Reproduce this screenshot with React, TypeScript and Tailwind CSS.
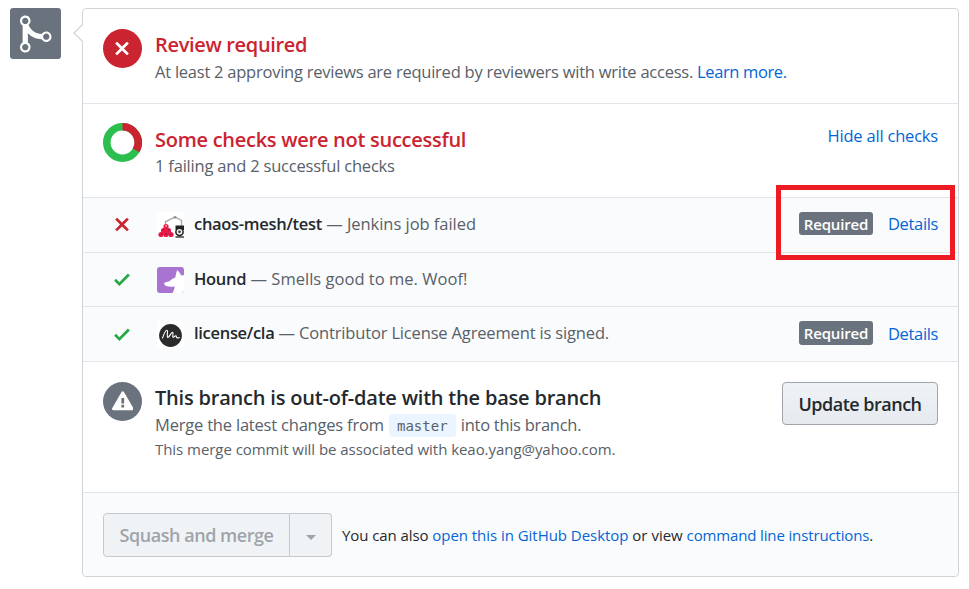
import React from "react";

function XIcon({ className }: { className: string }) {
  return (
    <svg viewBox="0 0 12 16" className={className} fill="currentColor">
      <path d="M7.48 8l3.75 3.75-1.48 1.48L6 9.48l-3.75 3.75-1.48-1.48L4.52 8 .77 4.25l1.48-1.48L6 6.52l3.75-3.75 1.48 1.48L7.48 8z" />
    </svg>
  );
}

function CheckIcon() {
  return (
    <svg viewBox="0 0 12 16" className="h-[21px] w-[16px] text-[#28a745]" fill="currentColor">
      <path d="M12 5l-8 8-4-4 1.5-1.5L4 10l6.5-6.5L12 5z" />
    </svg>
  );
}

function MergeIcon() {
  return (
    <svg viewBox="0 0 12 16" className="h-[42px] w-[31.5px] text-white" fill="currentColor">
      <path
        fillRule="evenodd"
        d="M10 7c-.73 0-1.38.41-1.73 1.02V8C7.22 7.98 6 7.64 5.14 6.98c-.75-.58-1.5-1.61-1.89-2.44A1.993 1.993 0 002 .99C.89.99 0 1.89 0 3a2 2 0 001 1.72v6.56c-.59.35-1 .99-1 1.72 0 1.11.89 2 2 2a1.993 1.993 0 001-3.72V7.67c.67.7 1.44 1.27 2.3 1.69.86.42 2.03.63 2.97.64v-.02c.36.61 1 1.02 1.73 1.02 1.11 0 2-.89 2-2 0-1.11-.89-2-2-2zm-6.8 6c0 .66-.55 1.2-1.2 1.2-.65 0-1.2-.55-1.2-1.2 0-.65.55-1.2 1.2-1.2.65 0 1.2.55 1.2 1.2zM3.2 3c0 .66-.55 1.2-1.2 1.2-.65 0-1.2-.55-1.2-1.2 0-.65.55-1.2 1.2-1.2.65 0 1.2.55 1.2 1.2zm6.8 7.2c-.65 0-1.2-.55-1.2-1.2 0-.65.55-1.2 1.2-1.2.65 0 1.2.55 1.2 1.2 0 .65-.55 1.2-1.2 1.2z"
      />
    </svg>
  );
}

function AlertIcon() {
  return (
    <svg viewBox="0 0 16 16" className="h-[21.5px] w-[21.5px] text-white" fill="currentColor">
      <path
        fillRule="evenodd"
        d="M8.893 1.5c-.183-.31-.52-.5-.887-.5s-.703.19-.886.5L.138 13.499a.98.98 0 000 1.001c.193.31.53.501.886.501h13.964c.367 0 .704-.19.877-.5a1.03 1.03 0 00.01-1.002L8.893 1.5zm.133 11.497H6.987v-2.003h2.039v2.003zm0-3.004H6.987V5.987h2.039v4.006z"
      />
    </svg>
  );
}

function StatusDonut() {
  return (
    <svg viewBox="0 0 39 39" className="h-[39px] w-[39px] shrink-0" fill="none" strokeWidth="7.6">
      <circle cx="19.5" cy="19.5" r="15.7" stroke="#2cbe4e" />
      <path d="M19.5 3.8A15.7 15.7 0 0 1 33.1 27.35" stroke="#cb2431" />
    </svg>
  );
}

function ChaosAvatar() {
  return (
    <svg viewBox="0 0 27 27" className="h-[27px] w-[27px]">
      <rect width="27" height="27" rx="3" fill="#fff" />
      <path d="M8.5 12V9.8L18 5l6.500 3.500v5" stroke="#aaa" strokeWidth="1.400" fill="none" />
      <circle cx="18" cy="5.300" r="1.500" fill="#999" />
      <g fill="#ed1846">
        <circle cx="9" cy="14.600" r="2.600" />
        <circle cx="6.500" cy="18.500" r="2.600" />
        <circle cx="11.500" cy="18.500" r="2.600" />
        <circle cx="4" cy="22.500" r="2.600" />
        <circle cx="9" cy="22.500" r="2.600" />
        <circle cx="14" cy="22.500" r="2.600" />
        <path d="M9 14l6 9H3z" />
      </g>
      <g fill="#7a2757">
        <circle cx="6.400" cy="17.800" r=".8" />
        <circle cx="11.600" cy="17.800" r=".8" />
        <circle cx="4.500" cy="21.800" r=".8" />
        <circle cx="9" cy="21.800" r=".9" />
        <circle cx="13.500" cy="21.800" r=".8" />
        <circle cx="9" cy="14" r=".8" fill="#fff" />
      </g>
      <path d="M18.500 13.500h8.500v4.500h-8.500z" fill="#222" />
      <circle cx="22.500" cy="20" r="4.400" fill="#222" />
      <circle cx="22.500" cy="19.800" r="2.900" fill="#eee" />
      <circle cx="22.500" cy="19.800" r="1.300" fill="#333" />
      <path d="M18.500 25H27" stroke="#333" strokeWidth="1.400" />
    </svg>
  );
}

function HoundAvatar() {
  return (
    <svg viewBox="0 0 27 26" className="h-[26px] w-[27px]">
      <rect width="27" height="26" rx="3" fill="#a873d1" />
      <path
        d="M7.200 15.800l5.300-1.500c1-.8 2.400-2.800 5.700-3.800L20 3c1.800 1.500 3.400 3.300 4.200 5.500L27 8v15a3 3 0 0 1-3 3h-8.500c1.200-2 2-4.200 2.200-6.500-3 .4-6 .4-8.500-.5-1.300-.5-2.200-1.700-2-3.200z"
        fill="#fff"
      />
    </svg>
  );
}

function LicenseAvatar() {
  return (
    <svg viewBox="0 0 27 27" className="h-[27px] w-[27px]">
      <rect width="27" height="27" rx="3" fill="#fff" />
      <circle cx="13.500" cy="14.500" r="11.400" fill="#2b2b2b" />
      <path
        d="M5.500 17C7 13 8.600 9.300 9.800 9.300c1.700 0-.3 5.500.8 7 1.300 1 3.300-5 5-4.900 1.500.4-.8 4 .4 4.800 1 .4 1.900-1.700 2.900-1.400.9.400.2 1.800 1.300 2.100.8.100 1.500-.2 2.100-.3"
        stroke="#fff"
        strokeWidth="1.100"
        fill="none"
        strokeLinecap="round"
      />
    </svg>
  );
}

type CheckRowProps = {
  status: React.ReactNode;
  avatar: React.ReactNode;
  name: React.ReactNode;
  message: React.ReactNode;
  actions?: React.ReactNode;
  className: string;
};

function RequiredBadge({ className }: { className: string }) {
  return (
    <span
      className={`flex w-[74px] items-center justify-center rounded-[3px] bg-[#6a737d] text-[15px] font-semibold tracking-[-0.18px] text-white ${className}`}
    >
      Required
    </span>
  );
}

function CheckRow({ status, avatar, name, message, actions, className }: CheckRowProps) {
  return (
    <div className={`flex items-center border-b border-[#e1e4e8] bg-[#fafbfc] pr-5 pl-5 ${className}`}>
      <div className="flex w-[37px] justify-center">{status}</div>
      <div className="ml-[17px] w-[37px]">{avatar}</div>
      <div className="flex-1 pb-[2px]">
        {name}
        {message}
      </div>
      {actions}
    </div>
  );
}

export default function App() {
  return (
    <div className="relative flex h-[589px] w-[969px] bg-white pt-2 pl-[10px] font-['Open_Sans','Noto_Sans',sans-serif] text-[16.5px] leading-6 whitespace-nowrap text-[#586069]">
      <div className="flex h-[51px] w-[51px] shrink-0 rounded-[3px] bg-[#6a737d] pt-[5px] pl-[10px]">
        <MergeIcon />
      </div>

      <div className="relative ml-[21px] flex h-[569px] w-[877px] flex-col rounded-[4px] border border-[#d1d5da] bg-white">
        <svg viewBox="0 0 11 20" className="absolute top-[14px] -left-[10px] h-5 w-[11px]">
          <path d="M11 0L1 10l10 10z" fill="#fff" />
          <path d="M10 1L1 10l9 9" fill="none" stroke="#d1d5da" strokeWidth="1.300" />
        </svg>

        <section className="flex h-[95px] border-b border-[#e1e4e8] pt-5 pl-5">
          <div className="flex h-[39px] w-[39px] items-center justify-center rounded-full bg-[#cb2431] pr-[2px] text-white">
            <XIcon className="h-[21px] w-[16px]" />
          </div>
          <div className="ml-[13px]">
            <h3 className="mt-[2px] text-[20px] leading-7 font-semibold tracking-[-0.33px] text-[#cb2431]">Review required</h3>
            <p className="mt-px">
              <span className="tracking-[-0.24px]">
                At least 2 approving reviews are required by reviewers with write access.{" "}
              </span>
              <a className="tracking-[-0.38px] text-[#0366d6]">Learn more.</a>
            </p>
          </div>
        </section>

        <section className="flex h-[94px] border-b border-[#e1e4e8] pt-[19px] pr-5 pl-5">
          <StatusDonut />
          <div className="ml-[13px] flex-1">
            <h3 className="mt-[3px] text-[20px] leading-7 font-semibold tracking-[-0.27px] text-[#cb2431]">Some checks were not successful</h3>
            <p className="tracking-[-0.2px]">1 failing and 2 successful checks</p>
          </div>
          <a className="mt-px tracking-[-0.2px] text-[#0366d6]">Hide all checks</a>
        </section>

        <CheckRow
          className="h-[55px]"
          status={<XIcon className="mb-px h-[21px] w-[16px] text-[#cb2431]" />}
          avatar={<ChaosAvatar />}
          name={<strong className="font-semibold tracking-[-0.3px] text-[#24292e]">chaos-mesh/test</strong>}
          message={<span className="tracking-[-0.04px]"> — Jenkins job failed</span>}
          actions={
            <div className="flex items-center pb-[3px]">
              <RequiredBadge className="h-[23px]" />
              <a className="mt-px ml-[15px] w-[50px] tracking-[-0.35px] text-[#0366d6]">Details</a>
            </div>
          }
        />
        <CheckRow
          className="h-[54px]"
          status={<CheckIcon />}
          avatar={<HoundAvatar />}
          name={<strong className="font-semibold tracking-[-0.3px] text-[#24292e]">Hound</strong>}
          message={<span className="tracking-[0.02px]"> — Smells good to me. Woof!</span>}
        />
        <CheckRow
          className="h-[55px]"
          status={<CheckIcon />}
          avatar={<LicenseAvatar />}
          name={<strong className="font-semibold tracking-[-0.3px] text-[#24292e]">license/cla</strong>}
          message={<span className="tracking-[-0.16px]"> — Contributor License Agreement is signed.</span>}
          actions={
            <div className="flex items-center pb-[2px]">
              <RequiredBadge className="h-[24px]" />
              <a className="mt-[2px] ml-[15px] w-[50px] tracking-[-0.35px] text-[#0366d6]">Details</a>
            </div>
          }
        />

        <section className="flex h-[131px] border-b border-[#e1e4e8] pt-5 pr-5 pl-5">
          <div className="flex h-[39px] w-[39px] items-center justify-center rounded-full bg-[#6a737d] pb-[2px]">
            <AlertIcon />
          </div>
          <div className="ml-[13px] flex-1">
            <h3 className="mt-[2px] text-[20px] leading-7 font-semibold tracking-[-0.2px] text-[#24292e]">
              This branch is out-of-date with the base branch
            </h3>
            <p className="flex items-center">
              <span className="tracking-[-0.2px]">Merge the latest changes from</span>
              <code className="mx-[5px] mt-[2px] flex h-[23px] w-[67px] items-center justify-center rounded-[3px] bg-[#eaf5ff] font-['DejaVu_Sans_Mono',monospace] text-[14px]">
                master
              </code>
              <span className="tracking-[-0.28px]">into this branch.</span>
            </p>
            <p className="text-[15px] tracking-[-0.05px]">This merge commit will be associated with keao.yang@yahoo.com.</p>
          </div>
          <button className="h-[43px] w-[156px] rounded-[4px] border border-[#a0a5ab] bg-linear-to-b from-[#eff3f6] to-[#e6eaef] text-[18px] font-semibold tracking-[-0.5px] text-[#24292e]">
            Update branch
          </button>
        </section>

        <footer className="flex flex-1 rounded-b-[4px] bg-[#fafbfc] pt-5 pl-5">
          <button className="h-[44px] w-[187px] rounded-l-[4px] border border-[#c5c9cd] bg-[#eff3f6] text-[18px] font-semibold tracking-[-0.45px] text-[#a0a4a8]">
            Squash and merge
          </button>
          <button className="flex h-[44px] w-[42px] items-center justify-center rounded-r-[4px] border border-l-0 border-[#c5c9cd] bg-[#eff3f6] pt-[5px]">
            <svg viewBox="0 0 10 5" className="h-[5px] w-[10px]" fill="#a0a4a8">
              <path d="M0 0h10L5 5z" />
            </svg>
          </button>
          <p className="mt-[10px] ml-[10px] text-[15px] text-[#24292e]">
            <span className="tracking-[-0.08px]">You can also </span>
            <a className="tracking-[-0.04px] text-[#0366d6]">open this in GitHub Desktop</a>
            <span> or view </span>
            <a className="tracking-[-0.14px] text-[#0366d6]">command line instructions</a>.
          </p>
        </footer>
      </div>

      <div className="absolute top-[185px] left-[776px] h-[75px] w-[179px] border-[5px] border-[#ed1c24]" />
    </div>
  );
}
